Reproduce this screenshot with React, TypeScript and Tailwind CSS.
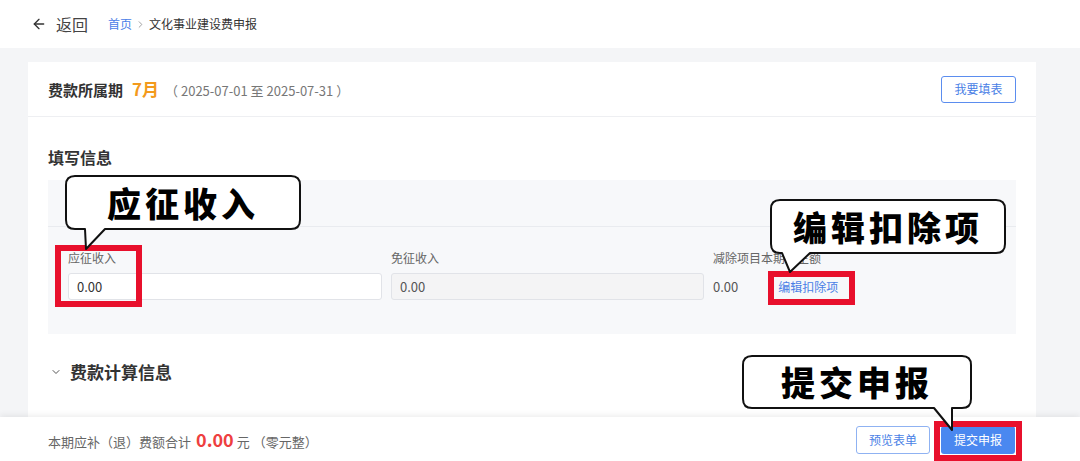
import { ArrowLeft, ChevronDown, ChevronRight } from "lucide-react";

const FONT = { fontFamily: '"Noto Sans CJK SC", "Noto Sans", sans-serif' };

interface CalloutProps {
  text: string;
  x: number;
  y: number;
  w: number;
  h: number;
  // tail: left base x, right base x, tip x, tip y (relative to the box)
  tail: [number, number, number, number];
}

function Callout({ text, x, y, w, h, tail }: CalloutProps) {
  const r = 9;
  const [b1, b2, tx, ty] = tail;
  const d = `M${r},0 H${w - r} Q${w},0 ${w},${r} V${h - r} Q${w},${h} ${w - r},${h} H${b2} L${tx},${ty} L${b1},${h} H${r} Q0,${h} 0,${h - r} V${r} Q0,0 ${r},0 Z`;
  return (
    <div className="absolute" style={{ left: x, top: y, width: w, height: h }}>
      <svg className="absolute left-0 top-0 overflow-visible" width={w} height={h}>
        <path d={d} fill="#fff" stroke="#111" strokeWidth={2} strokeLinejoin="round" />
      </svg>
      <div className="relative flex h-full items-center justify-center text-[34px] font-black leading-none tracking-[4px] text-black">
        {text}
      </div>
    </div>
  );
}

function RedBox({ x, y, w, h }: { x: number; y: number; w: number; h: number }) {
  return (
    <div
      className="absolute border-[6px] border-[#e8102c]"
      style={{ left: x, top: y, width: w, height: h }}
    />
  );
}

export default function App() {
  return (
    <div className="relative flex h-[461px] w-[1080px] flex-col overflow-hidden bg-white text-[#333]" style={FONT}>
      {/* top bar */}
      <header className="flex h-[48px] shrink-0 items-center bg-white pl-[31px]">
        <ArrowLeft size={16} strokeWidth={2} className="text-[#333]" />
        <span className="ml-[9px] text-[16px] text-[#444]">返回</span>
        <nav className="ml-[20px] flex items-center text-[12px]">
          <span className="text-[#4a80e8]">首页</span>
          <ChevronRight size={11} className="mx-[3px] text-[#999]" />
          <span className="text-[#333]">文化事业建设费申报</span>
        </nav>
      </header>

      {/* page body */}
      <main className="flex flex-1 flex-col overflow-hidden bg-[#f4f5f7] pl-[28px] pr-[44px] pt-[14px]">
        <div className="flex-1 bg-white">
          <div className="flex h-[55px] items-center justify-between border-b border-[#eeeff2] px-[20px]">
            <div className="flex items-baseline">
              <span className="text-[15px] font-bold text-[#333]">费款所属期</span>
              <span className="ml-[9px] text-[17px] font-bold text-[#f39a1c]">7月</span>
              <span className="ml-[6px] text-[13px] text-[#777]">（ 2025-07-01 至 2025-07-31 ）</span>
            </div>
            <button className="h-[27px] w-[75px] rounded-[3px] border border-[#5b8def] text-[12px] text-[#4a7fe6]">
              我要填表
            </button>
          </div>

          <div className="px-[20px] pt-[28px]">
            <h2 className="text-[16px] font-bold leading-[24px] text-[#333]">填写信息</h2>

            <div className="mt-[11px] bg-[#f7f8fa]">
              <div className="h-[47px] border-b border-[#e9ebef]" />
              <div className="flex px-[20px] pb-[34px] pt-[23px]">
                <div className="w-[314px]">
                  <div className="text-[12px] leading-[16px] text-[#666]">应征收入</div>
                  <div className="mt-[7px] flex h-[27px] items-center rounded-[3px] border border-[#e1e3e8] bg-white px-[8px] text-[13px] text-[#333]">
                    0.00
                  </div>
                </div>
                <div className="ml-[9px] w-[313px]">
                  <div className="text-[12px] leading-[16px] text-[#666]">免征收入</div>
                  <div className="mt-[7px] flex h-[27px] items-center rounded-[3px] border border-[#e1e3e8] bg-[#f4f4f5] px-[8px] text-[13px] text-[#555]">
                    0.00
                  </div>
                </div>
                <div className="ml-[9px]">
                  <div className="text-[12px] leading-[16px] text-[#666]">减除项目本期发生额</div>
                  <div className="mt-[7px] flex h-[27px] items-center text-[13px]">
                    <span className="text-[#555]">0.00</span>
                    <span className="ml-[40px] text-[12px] text-[#4a7fe6]">编辑扣除项</span>
                  </div>
                </div>
              </div>
            </div>

            <div className="mt-[26px] flex items-center">
              <ChevronDown size={12} strokeWidth={2} className="ml-[2px] text-[#555]" />
              <h2 className="ml-[8px] text-[17px] font-bold leading-[24px] text-[#333]">费款计算信息</h2>
            </div>
          </div>
        </div>
      </main>

      {/* sticky footer */}
      <footer className="relative flex h-[44px] shrink-0 items-center justify-between bg-white pl-[48px] pr-[65px] shadow-[0_-2px_6px_rgba(0,0,0,0.07)]">
        <div className="flex items-baseline text-[13px] text-[#666]">
          <span>本期应补（退）费额合计</span>
          <span className="ml-[5px] text-[18px] font-bold text-[#ee3f3f]">0.00</span>
          <span className="ml-[3px]">元 （零元整）</span>
        </div>
        <div className="flex items-center gap-[11px] pt-[2px]">
          <button className="h-[28px] w-[74px] rounded-[3px] border border-[#8fb2f2] bg-white text-[12px] text-[#4a7fe6]">
            预览表单
          </button>
          <button className="h-[28px] w-[74px] rounded-[3px] bg-[#4a88f0] text-[12px] text-white">
            提交申报
          </button>
        </div>
      </footer>

      {/* annotations */}
      <RedBox x={55} y={245} w={87} h={62} />
      <RedBox x={768} y={271} w={87} h={34} />
      <RedBox x={934} y={421} w={88} h={40} />
      <Callout text="应征收入" x={66} y={176} w={234} h={53} tail={[19, 39, 20, 73]} />
      <Callout text="编辑扣除项" x={771} y={200} w={234} h={53} tail={[11, 39, 19, 72]} />
      <Callout text="提交申报" x={743} y={356} w={228} h={52} tail={[191, 209, 209, 74]} />
    </div>
  );
}
